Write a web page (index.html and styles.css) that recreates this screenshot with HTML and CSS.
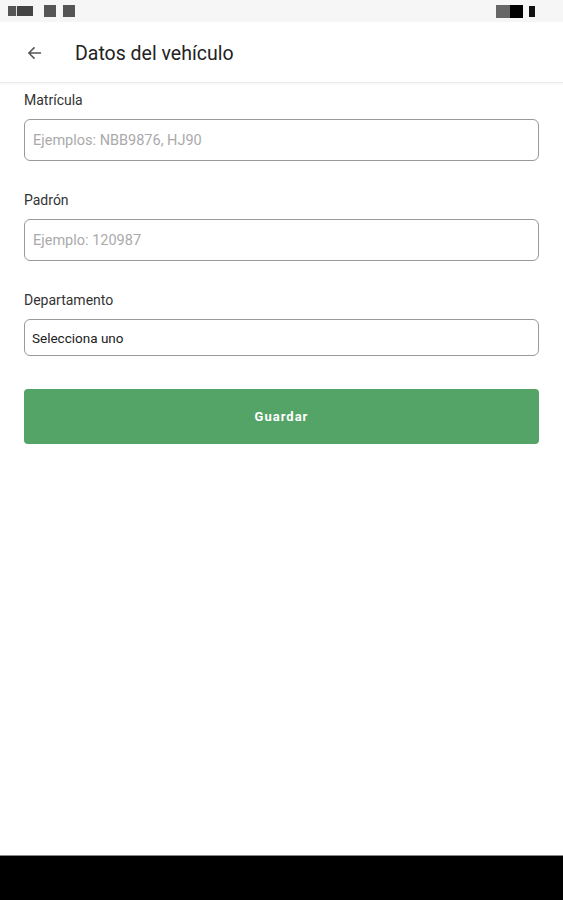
FILE: index.html
```html
<!DOCTYPE html>
<html lang="es">
<head>
    <meta charset="UTF-8">
    <meta name="viewport" content="width=device-width, initial-scale=1.0">
    <title>Datos del vehículo</title>
    <link rel="stylesheet" href="styles.css">
</head>
<body>
    <div class="screen">
        <div class="status-bar">
            <div class="status-left">
                <span class="sb-block"></span>
                <span class="sb-square"></span>
                <span class="sb-square"></span>
            </div>
            <div class="status-right">
                <span class="sb-battery"><span class="sb-battery-fill"></span></span>
                <span class="sb-pill"></span>
            </div>
        </div>

        <header class="app-bar">
            <button class="back-btn" aria-label="Volver">
                <svg width="16" height="16" viewBox="0 0 16 16">
                    <path d="M15 8H2M8 2L2 8l6 6" fill="none" stroke="#555" stroke-width="1.6"/>
                </svg>
            </button>
            <h1 class="title">Datos del vehículo</h1>
        </header>

        <main class="form">
            <div class="field">
                <label for="matricula">Matrícula</label>
                <input id="matricula" type="text" placeholder="Ejemplos: NBB9876, HJ90">
            </div>
            <div class="field">
                <label for="padron">Padrón</label>
                <input id="padron" type="text" placeholder="Ejemplo: 120987">
            </div>
            <div class="field">
                <label for="departamento">Departamento</label>
                <div id="departamento" class="select">Selecciona uno</div>
            </div>
            <button class="save-btn">Guardar</button>
        </main>

        <div class="nav-bar"></div>
    </div>
</body>
</html>
```

FILE: styles.css
```css
body {
    margin: 0;
    font-family: Roboto, 'Liberation Sans', sans-serif;
    background: #fff;
}
.screen {
    width: 563px;
    height: 900px;
    display: flex;
    flex-direction: column;
    overflow: hidden;
}
.status-bar {
    height: 22px;
    background: #f6f6f6;
    display: flex;
    justify-content: space-between;
    align-items: center;
    padding: 0 28px 0 8px;
}
.status-left,
.status-right {
    display: flex;
    align-items: center;
}
.sb-block {
    width: 25px;
    height: 10px;
    background: linear-gradient(90deg, #555 0 30%, #ddd 30% 36%, #444 36%);
    margin-right: 11px;
}
.sb-square {
    width: 12px;
    height: 12px;
    background: #555;
    margin-right: 7px;
}
.sb-battery {
    width: 27px;
    height: 13px;
    background: #666;
    display: flex;
    justify-content: flex-end;
    margin-right: 6px;
}
.sb-battery-fill {
    width: 13px;
    height: 13px;
    background: #000;
}
.sb-pill {
    width: 6px;
    height: 11px;
    background: #111;
}
.app-bar {
    height: 60px;
    display: flex;
    align-items: center;
    background: #fff;
    border-bottom: 1px solid #ececec;
    box-shadow: 0 1px 2px rgba(0, 0, 0, 0.05);
}
.back-btn {
    background: none;
    border: none;
    padding: 0;
    margin: 2px 33px 0 27px;
    width: 15px;
    height: 16px;
    display: flex;
}
.title {
    margin: 2px 0 0 0;
    font-size: 19.5px;
    font-weight: 400;
    color: #222;
}
.form {
    flex: 1;
    padding: 8px 24px 0 24px;
    display: flex;
    flex-direction: column;
}
.field {
    display: flex;
    flex-direction: column;
    margin-bottom: 30px;
}
.field label {
    font-size: 14px;
    color: #333;
    line-height: 18px;
    margin-bottom: 10px;
}
.field input {
    height: 42px;
    box-sizing: border-box;
    border: 1px solid #999;
    border-radius: 6px;
    padding: 0 8px;
    font-family: inherit;
    font-size: 14.5px;
    color: #333;
}
.field input::placeholder {
    color: #aaa;
}
.select {
    height: 37px;
    box-sizing: border-box;
    border: 1px solid #999;
    border-radius: 6px;
    padding: 0 7px;
    font-size: 13.5px;
    color: #222;
    display: flex;
    align-items: center;
}
.save-btn {
    margin-top: 3px;
    height: 55px;
    border: none;
    border-radius: 4px;
    background: #55a467;
    color: #fff;
    font-family: inherit;
    font-size: 13px;
    font-weight: 700;
    letter-spacing: 1px;
}
.nav-bar {
    height: 44px;
    background: #000;
    border-top: 1px solid #888;
}
```
